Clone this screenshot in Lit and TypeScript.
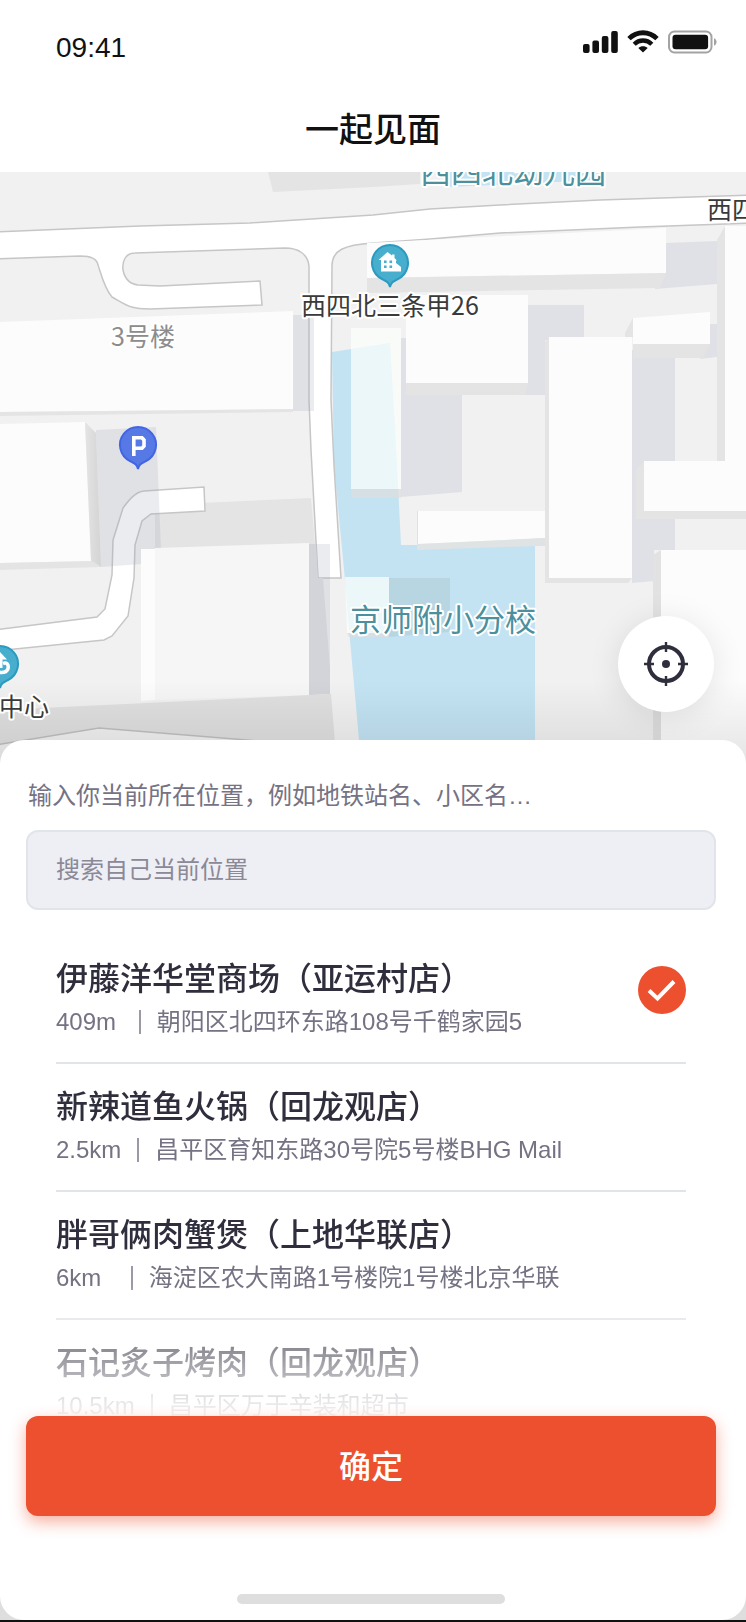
import { LitElement, html, css } from "lit";
import { customElement, property, state } from "lit/decorators.js";

interface Place {
  id: string;
  name: string;
  distance: string;
  address: string;
}

const PLACES: Place[] = [
  { id: "p1", name: "伊藤洋华堂商场（亚运村店）", distance: "409m ", address: "朝阳区北四环东路108号千鹤家园5" },
  { id: "p2", name: "新辣道鱼火锅（回龙观店）", distance: "2.5km", address: "昌平区育知东路30号院5号楼BHG Mail" },
  { id: "p3", name: "胖哥俩肉蟹煲（上地华联店）", distance: "6km  ", address: "海淀区农大南路1号楼院1号楼北京华联" },
  { id: "p4", name: "石记炙子烤肉（回龙观店）", distance: "10.5km", address: "昌平区万于辛装和超市" },
];

@customElement("status-bar")
export class StatusBar extends LitElement {
  static styles = css`
    :host {
      display: flex;
      justify-content: space-between;
      align-items: flex-start;
      box-sizing: border-box;
      height: 88px;
      padding: 30px 28px 0 56px;
      color: #111;
    }
    .time {
      font-size: 28px;
      line-height: 36px;
    }
    .icons {
      display: flex;
      gap: 9px;
    }
    svg {
      display: block;
    }
  `;
  render() {
    return html`
      <span class="time">09:41</span>
      <span class="icons">
        <svg width="35" height="24" viewBox="0 0 35 24" fill="#111" aria-hidden="true">
          <rect x="0" y="14" width="6.6" height="9" rx="2" />
          <rect x="9.4" y="10.5" width="6.6" height="12.5" rx="2" />
          <rect x="18.8" y="6" width="6.6" height="17" rx="2" />
          <rect x="28.2" y="1" width="6.6" height="22" rx="2" />
        </svg>
        <svg width="32" height="24" viewBox="0 0 32 24" aria-hidden="true">
          <path d="M2 8.6C10 .8 22 .8 30 8.6" fill="none" stroke="#111" stroke-width="4.8" />
          <path d="M7.2 14.2C12.2 9.3 19.8 9.3 24.8 14.2" fill="none" stroke="#111" stroke-width="4.4" />
          <path d="M11.3 18C14 15.6 18 15.6 20.7 18L16 22.6Z" fill="#111" />
        </svg>
        <svg width="50" height="24" viewBox="0 0 50 24" aria-hidden="true">
          <rect x="1" y="1.5" width="42.5" height="21" rx="5.5" fill="none" stroke="#a3a3a3" stroke-width="2" />
          <rect x="4.5" y="4.8" width="35.6" height="14.4" rx="3" fill="#111" />
          <path d="M46 8.3C49.4 9.4 49.4 14.6 46 15.7Z" fill="#a3a3a3" />
        </svg>
      </span>
    `;
  }
}

@customElement("street-map")
export class StreetMap extends LitElement {
  static styles = css`
    :host {
      display: block;
      height: 596px;
      overflow: hidden;
    }
    svg {
      display: block;
      width: 100%;
      height: 100%;
    }
    text {
      font-family: "Noto Sans CJK SC", sans-serif;
      paint-order: stroke;
      stroke: #fff;
      stroke-width: 4px;
      stroke-linejoin: round;
    }
    .road {
      fill: #fff;
      stroke: #c6c6c6;
      stroke-width: 1.5px;
    }
    .roof {
      fill: #fcfcfc;
    }
    .glass {
      fill: #fcfffb;
      fill-opacity: 0.7;
    }
    .wall {
      fill: #e4e4e4;
    }
    .shade {
      fill: #a0a3b9;
      fill-opacity: 0.21;
    }
    .water {
      fill: #c3e3f3;
    }
    .school {
      font-size: 31px;
      fill: #4b909c;
    }
    .poi {
      font-size: 25px;
      fill: #3a3a3a;
    }
    .block {
      font-size: 25px;
      fill: #8c8c8c;
    }
  `;
  render() {
    return html`
      <svg viewBox="0 172 746 596" preserveAspectRatio="xMidYMin slice" role="img" aria-label="地图">
        <defs>
          <linearGradient id="dusk" x1="0" y1="0" x2="0" y2="1">
            <stop offset="0" stop-color="#000" stop-opacity="0" />
            <stop offset="1" stop-color="#000" stop-opacity="0.1" />
          </linearGradient>
          <linearGradient id="side" x1="0" y1="0" x2="1" y2="0">
            <stop offset="0" stop-color="#e4e4e4" />
            <stop offset="1" stop-color="#d4d4d4" />
          </linearGradient>
        </defs>
        <rect x="0" y="172" width="746" height="596" fill="#f1f1f1" />
        <path class="wall" d="M268 172L273 192L373 187L420 184V172Z" />
        <path class="water" d="M448 172H600V180L448 187Z" />

        <path class="wall" d="M155 505L311 498L315 544L155 549Z" />
        <path class="water" d="M332 352L390 343L397 465L401 545H535V768H361L359 740L350 640L345 580L334 465Z" />

        <path class="road" d="M-5 232L140 226L250 223L373 215L430 209L500 205L600 200L750 195V223L640 227L500 233L430 239L373 243C344 245 332 250 332 266L331 400L334 465L341 578H318L311 450L309 400V266C308 254 298 248 285 248L135 253C125 253 122 262 123 270C125 280 130 284 138 285L160 286L260 281L262 305L150 309C130 309 128 306 112 297C104 288 100 270 98 265C97 258 88 256 80 256L-5 259Z" />
        <path class="road" d="M-5 630L97 617L105 609L112 575L113 540L123 508C129 500 135 492 144 491L204 487L205 511L151 514L142 521L135 545L134 578L128 616L112 636L104 640L-5 651Z" />

        <path class="roof" d="M0 322L293 311V409L0 412Z" />
        <path class="wall" d="M0 412L293 409V412L0 416Z" />
        <path class="shade" d="M293 315H314V411H293Z" />

        <path class="roof" d="M0 424L85 422L91 561L0 563Z" />
        <path fill="url(#side)" d="M85 422L96 433L101 567L91 561Z" />
        <path class="wall" d="M0 563L91 561L101 567L0 570Z" />
        <path class="shade" d="M96 430L156 427L161 549H141V564L101 567Z" />
        <path class="roof" d="M141 549H155V700L141 701Z" />
        <path fill="#f6f6f6" d="M155 548L309 543V695L155 700Z" />
        <path class="shade" d="M309 544H330V694L309 695Z" />
        <path fill="#d3d4d9" d="M309 544H316L318 578H323L330 668V694L309 695Z" />
        <path fill="#e0e0e0" d="M0 710L331 694L337 768H0Z" />
        <path fill="#f1f1f1" stroke="#c0c0c0" stroke-width="1.5" d="M-5 745L99 728L270 742L300 770H-5Z" />

        <path class="glass" d="M351 328H401V489H351Z" />
        <path fill="#ddd" fill-opacity="0.7" d="M351 489H401V498H351Z" />
        <path class="glass" d="M345 577H389V633H347Z" />
        <path fill="#ddd" fill-opacity="0.7" d="M347 633H389V637H349Z" />
        <path fill="#b8d5e2" d="M389 578H450V632L389 637Z" />

        <path fill="#e0e1e6" d="M401 338H462V492L401 497ZM528 305H584V340H545V395H520ZM666 243L717 241V284L655 289ZM632 350H675V550H654V581L632 583ZM703 324H717V357L700 359ZM535 538H545V546H535Z" />
        <path class="roof" d="M367 243L666 228V273L367 278Z" />
        <path class="wall" d="M367 278L666 273L660 288L367 293Z" />
        <path class="roof" d="M406 295H528V383H406Z" />
        <path class="wall" d="M406 383H528L525 395H406Z" />
        <path class="roof" d="M418 511H545V538L418 544Z" />
        <path fill="#dfe3e3" d="M417 511H418V544L545 538V542L535 546L417 550Z" />
        <path class="wall" d="M545 342L549 337V578H632L628 583H545Z" />
        <path class="roof" d="M549 337H632V578H549Z" />
        <path class="wall" d="M625 333L633 318V344H710L703 358H633V337H625Z" />
        <path class="roof" d="M633 318L710 312V344H633Z" />
        <path class="wall" d="M717 240L725 226V461H717Z" />
        <path class="roof" d="M725 226H746V461H725Z" />
        <path class="wall" d="M636 470L644 461V511H746V519H636Z" />
        <path class="roof" d="M644 461H746V511H644Z" />
        <path fill="#e2e2e2" d="M653 555L661 550V768H653Z" />
        <path class="roof" d="M661 550H746V768H661Z" />
        <rect x="0" y="680" width="746" height="88" fill="url(#dusk)" />

        <path fill="#5779e6" stroke="#4365e3" stroke-width="2" d="M138 469C137 464 134 463 130 461A18 18 0 1 1 146 461C142 463 139 464 138 469Z" />
        <path fill="none" stroke="#fff" stroke-width="3.600" d="M133.800 456V437.800H142L144 440V446L142 448.200H134" />
        <path fill="#47aece" stroke="#2b9abf" stroke-width="2" d="M390 287C389 282 386 281 382 279A18 18 0 1 1 398 279C394 281 391 282 390 287Z" />
        <path fill="#fff" d="M378.500 260L387.500 252L392 255.500V254.500H394.500V258L397 260.500H396V263L401 267V271.500H381V260Z" />
        <path fill="#47aece" d="M384 260.500H386.600V263H384ZM389.500 260.500H392.100V263H389.500ZM384 265.500H386.600V268H384ZM389.500 265.500H392.100V268H389.500Z" />
        <path fill="#47aece" stroke="#2b9abf" stroke-width="2" d="M0 688C-1 683 -4 682 -8 680A18 18 0 1 1 8 680C4 682 1 683 0 688Z" />
        <path fill="#fff" d="M0 652L7 659.500H2.500V668H0Z" />
        <path fill="none" stroke="#fff" stroke-width="3.600" d="M3 663.500C6.500 662 8.500 664 8.200 667.500C8 671.500 4.500 672.800 0 672.400" />

        <text class="school" x="420" y="183">西四北幼儿园</text>
        <text class="poi" x="707" y="219">西四</text>
        <text class="poi" x="301" y="315">西四北三条甲26</text>
        <text class="block" x="111" y="346">3号楼</text>
        <text class="school" x="350" y="631">京师附小分校</text>
        <text class="poi" x="-1" y="716">中心</text>
      </svg>
    `;
  }
}

@customElement("place-row")
export class PlaceRow extends LitElement {
  static styles = css`
    :host {
      display: block;
      border-bottom: 2px solid #e1e4e9;
    }
    .row {
      display: flex;
      justify-content: space-between;
      align-items: flex-start;
      gap: 16px;
      padding: 23px 0 22px;
      cursor: pointer;
    }
    .name {
      display: block;
      font-size: 32px;
      line-height: 40px;
      font-weight: 500;
      color: #2f2e3d;
    }
    .meta {
      display: flex;
      align-items: center;
      gap: 16px;
      margin-top: 5px;
      font-size: 24px;
      line-height: 36px;
      color: #757284;
    }
    .distance {
      white-space: pre;
    }
    .bar {
      width: 2px;
      height: 24px;
      background: #9b99a6;
    }
    .mark {
      position: relative;
      flex: none;
      width: 48px;
      height: 48px;
      margin-top: 7px;
    }
    .radio {
      appearance: none;
      display: block;
      width: 48px;
      height: 48px;
      margin: 0;
      border-radius: 24px;
      cursor: pointer;
    }
    .radio:checked {
      background: #ed502e;
    }
    .tick {
      position: absolute;
      inset: 0;
      display: none;
      pointer-events: none;
    }
    .radio:checked + .tick {
      display: block;
    }
  `;

  @property({ attribute: false }) place!: Place;
  @property({ type: Boolean }) selected = false;

  private pick() {
    this.dispatchEvent(new CustomEvent("pick", { detail: this.place.id }));
  }

  render() {
    const { id, name, distance, address } = this.place;
    return html`
      <label class="row" for=${id}>
        <span>
          <span class="name">${name}</span>
          <span class="meta"><span class="distance">${distance}</span><span class="bar"></span><span>${address}</span></span>
        </span>
        <span class="mark">
          <input class="radio" type="radio" name="place" id=${id} .checked=${this.selected} @change=${this.pick} />
          <svg class="tick" width="48" height="48" viewBox="0 0 48 48" aria-hidden="true">
            <path d="M11 24.500L19.500 32.500L36 15.500" fill="none" stroke="#fff" stroke-width="4" />
          </svg>
        </span>
      </label>
    `;
  }
}

@customElement("app-root")
export class AppRoot extends LitElement {
  static styles = css`
    :host {
      display: flex;
      flex-direction: column;
      box-sizing: border-box;
      height: 100vh;
      min-height: 1400px;
      border-bottom: 2px solid #111;
      background: #dedede;
      font-family: "Liberation Sans", "Noto Sans CJK SC", sans-serif;
    }
    .top {
      background: #fff;
    }
    .title {
      margin: 0;
      font-size: 34px;
      line-height: 84px;
      font-weight: 500;
      text-align: center;
      color: #111;
    }
    .map {
      position: relative;
    }
    .locate {
      position: absolute;
      right: 32px;
      top: 444px;
      display: grid;
      place-items: center;
      width: 96px;
      height: 96px;
      padding: 0;
      border: 0;
      border-radius: 48px;
      background: #fff;
      box-shadow: 0 4px 32px rgba(0, 0, 0, 0.1);
      cursor: pointer;
    }
    .sheet {
      position: relative;
      display: flex;
      flex-direction: column;
      flex: 1 1 0;
      min-height: 0;
      margin-top: -28px;
      padding: 38px 30px 16px 26px;
      border-radius: 24px;
      background: #fff;
    }
    .hint {
      margin-left: 2px;
      font-size: 24px;
      line-height: 36px;
      color: #757284;
    }
    .search {
      box-sizing: border-box;
      width: 100%;
      height: 80px;
      margin: 16px 0 26px;
      padding: 0 28px;
      border: 2px solid #e1e4ea;
      border-radius: 12px;
      outline: none;
      background: #eeeff4;
      font: inherit;
      font-size: 24px;
      color: #2f2e3d;
    }
    .search::placeholder {
      color: #8b8997;
      opacity: 1;
    }
    .list {
      flex: 1 1 0;
      min-height: 0;
      margin: 0;
      padding: 0 30px;
      overflow-y: auto;
      scrollbar-width: none;
      list-style: none;
      mask-image: linear-gradient(to bottom, #000 calc(100% - 132px), rgba(0, 0, 0, 0.08));
    }
    .confirm {
      position: relative;
      flex: none;
      height: 100px;
      padding: 0 0 4px;
      border: 0;
      border-radius: 12px;
      background: #ed502e;
      box-shadow: 0 6px 16px rgba(237, 80, 46, 0.45);
      font: inherit;
      font-size: 32px;
      font-weight: 500;
      color: #fff;
      cursor: pointer;
    }
    .home {
      flex: none;
      align-self: center;
      width: 268px;
      height: 10px;
      margin-top: 78px;
      border-radius: 5px;
      background: #dedede;
    }
  `;

  @state() private chosen = "p1";

  render() {
    return html`
      <header class="top">
        <status-bar></status-bar>
        <h1 class="title">一起见面</h1>
      </header>
      <div class="map">
        <street-map></street-map>
        <button class="locate" type="button" aria-label="定位">
          <svg width="44" height="44" viewBox="0 0 44 44" fill="none" stroke="#2f2e3d" aria-hidden="true">
            <circle cx="22" cy="22" r="17" stroke-width="4" />
            <path d="M22 0V10M22 34V44M0 22H10M34 22H44" stroke-width="2.400" />
            <circle cx="22" cy="22" r="4" fill="#2f2e3d" stroke="none" />
          </svg>
        </button>
      </div>
      <main class="sheet">
        <label class="hint" for="search">输入你当前所在位置，例如地铁站名、小区名…</label>
        <input class="search" id="search" type="text" placeholder="搜索自己当前位置" />
        <ul class="list">
          ${PLACES.map(
            (place) => html`<li>
              <place-row
                .place=${place}
                .selected=${place.id === this.chosen}
                @pick=${(e: CustomEvent<string>) => (this.chosen = e.detail)}
              ></place-row>
            </li>`
          )}
        </ul>
        <button class="confirm" type="button">确定</button>
        <span class="home"></span>
      </main>
    `;
  }
}
